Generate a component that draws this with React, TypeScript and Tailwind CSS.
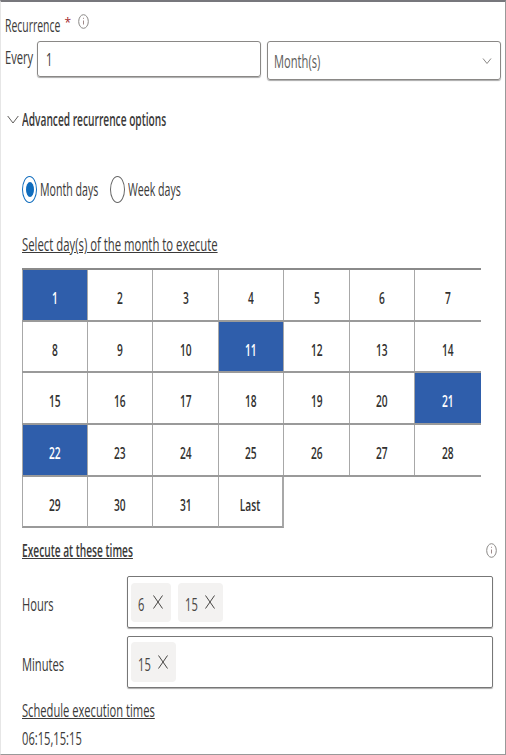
import React from "react";

const weeks = [
  ["1", "2", "3", "4", "5", "6", "7"],
  ["8", "9", "10", "11", "12", "13", "14"],
  ["15", "16", "17", "18", "19", "20", "21"],
  ["22", "23", "24", "25", "26", "27", "28"],
  ["29", "30", "31", "Last"],
];
const selected = ["1", "11", "21", "22"];

function Txt({ children, className = "scale-x-[0.62]" }: { children: React.ReactNode; className?: string }) {
  return <span className={`inline-block origin-left whitespace-nowrap text-[18px] leading-[22px] text-[#3b3a39] ${className}`}>{children}</span>;
}

function Info({ className = "" }: { className?: string }) {
  return (
    <svg width="11" height="15" viewBox="0 0 11 15" fill="none" className={className}>
      <ellipse cx="5.5" cy="7.5" rx="4.8" ry="6.8" stroke="#8a8886" />
      <path d="M5.5 6.5v4M5.5 3.8v1" stroke="#a08a8a" />
    </svg>
  );
}

function Chip({ label, gap, className = "" }: { label: string; gap: string; className?: string }) {
  return (
    <div className={`flex items-center bg-[#f3f2f1] rounded-sm ${className}`}>
      <span className={`inline-block origin-left scale-x-[0.62] pt-1 text-[18px] text-[#484644] ${gap}`}>{label}</span>
      <svg width="10" height="14" viewBox="0 0 10 14" fill="none">
        <path d="M.5 .5l9 13M9.5 .5l-9 13" stroke="#484644" />
      </svg>
    </div>
  );
}

function Days() {
  return (
    <div className="w-[459px] ml-[21px] mt-[11px] border-t-2 border-[#8a8a8a]">
      {weeks.map((week, i) => (
        <div key={i} className={`grid grid-cols-7 h-[51.7px] ${i === 4 ? "" : "border-b-2 border-[#9a9a9a]"}`}>
          {week.map((day) => {
            const on = selected.includes(day);
            return (
              <div
                key={day}
                className={`flex items-center justify-center pt-[6px] border-r border-[#a8a8a8] first:border-l ${
                  on ? "bg-[#2f5eab] text-white" : "text-[#323130]"
                } ${i === 4 ? "border-b-2 border-b-[#9a9a9a]" : ""} ${day === "Last" ? "border-r-2" : ""} ${day === "7" || day === "14" || day === "21" || day === "28" ? "border-r-0" : ""}`}
              >
                <span className="inline-block scale-x-[0.6] text-[17px] font-semibold">{day}</span>
              </div>
            );
          })}
        </div>
      ))}
    </div>
  );
}

export default function App() {
  return (
    <div className="w-[506px] h-[755px] overflow-hidden bg-white border-t-2 border-r border-b border-l border-t-[#77777c] border-r-[#999] border-b-[#999] border-l-[#e6e6e6] font-['Open_Sans',sans-serif]">
      <div className="flex items-start ml-1 mt-[12px] h-[22px]">
        <Txt className="scale-x-[0.58]">Recurrence</Txt>
        <span className="-ml-[36px] text-[#a4262c] text-[12px]">*</span>
        <Info className="ml-[7px]" />
      </div>

      <div className="flex items-start ml-1 mt-[5px]">
        <div className="w-[32px] mt-[5px]"><Txt>Every</Txt></div>
        <div className="w-[224px] h-[36px] border border-[#8a8886] rounded-[3px] shadow-[0_1px_1px_#aaa] flex items-center pl-2">
          <Txt>1</Txt>
        </div>
        <div className="ml-[6px] w-[234px] h-[39px] border border-[#8a8886] rounded-[3px] shadow-[0_1px_1px_#aaa] flex items-center justify-between pl-[6px] pr-2">
          <Txt className="scale-x-[0.62] text-[#605e5c]">Month(s)</Txt>
          <svg width="10" height="8" viewBox="0 0 10 8" fill="none"><path d="M1 1.5l4 5 4-5" stroke="#8a8886" /></svg>
        </div>
      </div>

      <div className="flex items-center ml-[6px] mt-[28px]">
        <svg width="12" height="11" viewBox="0 0 12 11" fill="none"><path d="M.7 2l5.3 7 5.3-7" stroke="#605e5c" /></svg>
        <Txt className="ml-[3px] font-semibold scale-x-[0.565]">Advanced recurrence options</Txt>
      </div>

      <div className="flex items-center ml-[21px] mt-[46px]">
        <div className="w-[15px] h-[27px] shrink-0 rounded-[50%] border border-[#0f6cbd] flex items-center justify-center">
          <div className="w-[8px] h-[15px] rounded-[50%] bg-[#0f6cbd]" />
        </div>
        <div className="ml-[3px] w-[70px]"><Txt className="scale-x-[0.59]">Month days</Txt></div>
        <div className="w-[15px] h-[27px] shrink-0 rounded-[50%] border border-[#666]" />
        <div className="ml-[3px]"><Txt className="scale-x-[0.59]">Week days</Txt></div>
      </div>

      <div className="ml-[21px] mt-[30px] h-[24px]">
        <Txt className="underline scale-x-[0.63]">Select day(s) of the month to execute</Txt>
      </div>

      <Days />

      <div className="flex items-center justify-between ml-[21px] mr-[8px] mt-[11px]">
        <Txt className="underline font-semibold scale-x-[0.565]">Execute at these times</Txt>
        <Info />
      </div>

      <div className="flex items-center ml-[21px] mt-[15px]">
        <div className="w-[105px] pt-[6px]"><Txt>Hours</Txt></div>
        <div className="w-[366px] h-[52px] border border-[#777] rounded-[2px] shadow-[0_1px_1px_#aaa] flex items-center pl-[3px] gap-[7px]">
          <Chip label="6" gap="w-[15px]" className="w-[40px] h-[39px] pl-[7px]" />
          <Chip label="15" gap="w-[20px]" className="w-[45px] h-[39px] pl-[7px]" />
        </div>
      </div>

      <div className="flex items-center ml-[21px] mt-[8px]">
        <div className="w-[105px] pt-[6px]"><Txt>Minutes</Txt></div>
        <div className="w-[366px] h-[52px] border border-[#777] rounded-[2px] shadow-[0_1px_1px_#aaa] flex items-center pl-[3px]">
          <Chip label="15" gap="w-[20px]" className="w-[45px] h-[40px] pl-[7px]" />
        </div>
      </div>

      <div className="ml-[21px] mt-[11px] h-[24px]">
        <Txt>
          <span className="underline">Schedule execution times</span>
        </Txt>
      </div>
      <div className="ml-[21px] mt-[4px]">
        <Txt>06:15,15:15</Txt>
      </div>
    </div>
  );
}
